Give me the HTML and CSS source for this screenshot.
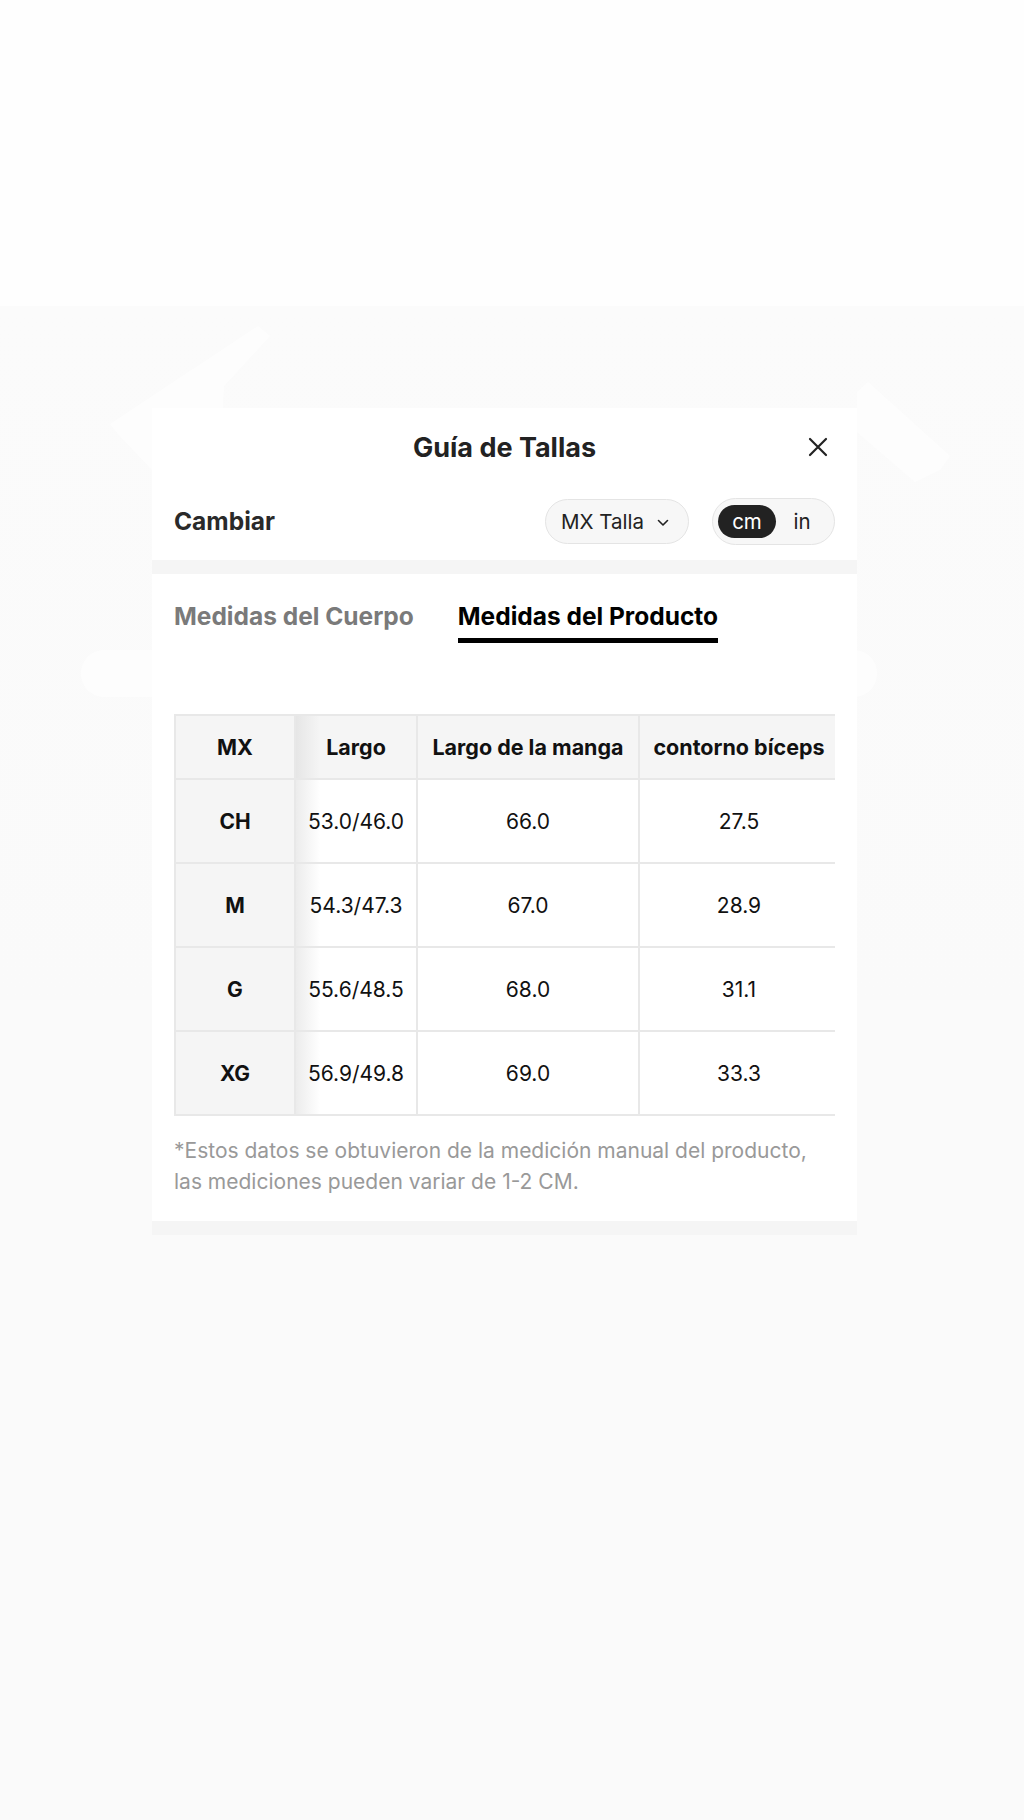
FILE: index.html
```html
<!DOCTYPE html>
<html lang="es">
<head>
    <meta charset="UTF-8">
    <meta name="viewport" content="width=device-width, initial-scale=1.0">
    <link rel="stylesheet" href="styles.css">
    <title>Guía de Tallas</title>
</head>
<body>
    <!-- faint product photo behind the sheet -->
    <svg class="backdrop" width="1024" height="1820" viewBox="0 0 1024 1820">
        <g fill="#fff" opacity="0.6">
            <polygon points="258,326 270,336 224,386 222,420 152,420 152,470 118,434 110,424"/>
            <polygon points="857,392 868,382 950,456 940,470 915,482 857,432"/>
            <rect x="81" y="650" width="796" height="47" rx="23"/>
        </g>
    </svg>

    <div class="sheet">
        <div class="sheet-head">
            <span></span>
            <h2 class="sheet-title">Guía de Tallas</h2>
            <button class="close-btn" type="button">
                <svg width="20" height="20" viewBox="0 0 20 20">
                    <path d="M2 2 L18 18 M18 2 L2 18" stroke="#222" stroke-width="2.2" stroke-linecap="round"/>
                </svg>
            </button>
        </div>

        <div class="switch-row">
            <span class="switch-label">Cambiar</span>
            <div class="switch-controls">
                <button class="size-select" type="button">
                    MX Talla
                    <svg class="chevron" width="12" height="8" viewBox="0 0 12 8">
                        <path d="M1.5 1.5 L6 6 L10.5 1.5" fill="none" stroke="#222" stroke-width="1.6" stroke-linecap="round" stroke-linejoin="round"/>
                    </svg>
                </button>
                <div class="unit-toggle">
                    <span class="unit active">cm</span>
                    <span class="unit">in</span>
                </div>
            </div>
        </div>

        <div class="divider"></div>

        <div class="tabs">
            <span class="tab">Medidas del Cuerpo</span>
            <span class="tab active">Medidas del Producto</span>
        </div>

        <div class="table-wrap">
            <table class="size-table">
                <colgroup>
                    <col class="c-size">
                    <col class="c-largo">
                    <col class="c-manga">
                    <col class="c-biceps">
                </colgroup>
                <thead>
                    <tr>
                        <th>MX</th>
                        <th>Largo</th>
                        <th>Largo de la manga</th>
                        <th>contorno bíceps</th>
                    </tr>
                </thead>
                <tbody>
                    <tr>
                        <th>CH</th>
                        <td>53.0/46.0</td>
                        <td>66.0</td>
                        <td>27.5</td>
                    </tr>
                    <tr>
                        <th>M</th>
                        <td>54.3/47.3</td>
                        <td>67.0</td>
                        <td>28.9</td>
                    </tr>
                    <tr>
                        <th>G</th>
                        <td>55.6/48.5</td>
                        <td>68.0</td>
                        <td>31.1</td>
                    </tr>
                    <tr>
                        <th>XG</th>
                        <td>56.9/49.8</td>
                        <td>69.0</td>
                        <td>33.3</td>
                    </tr>
                </tbody>
            </table>
        </div>

        <p class="note">*Estos datos se obtuvieron de la medición manual del producto,<br>las mediciones pueden variar de 1-2 CM.</p>

        <div class="divider"></div>
    </div>
</body>
</html>
```

FILE: styles.css
```css
html {
    background: linear-gradient(to bottom, #fefefe 0, #fefefe 306px, #fbfbfb 306px, #fafafa 1000px);
}

body {
    margin: 0;
    min-height: 1820px;
    padding-top: 408px;
    box-sizing: border-box;
    font-family: Inter, "Noto Sans", sans-serif;
    color: #222;
    position: relative;
}

.backdrop {
    position: absolute;
    top: 0;
    left: 0;
    z-index: 0;
}

.sheet {
    position: relative;
    z-index: 1;
    margin-left: 152px;
    width: 705px;
    background: #fff;
}

/* header */
.sheet-head {
    display: grid;
    grid-template-columns: 1fr auto 1fr;
    align-items: center;
    height: 78px;
    padding: 0 22px;
}

.sheet-title {
    margin: 0;
    font-size: 27px;
    font-weight: 700;
    color: #222;
}

.close-btn {
    justify-self: end;
    width: 30px;
    height: 30px;
    margin-right: 2px;
    padding: 0;
    border: none;
    background: none;
    display: flex;
    align-items: center;
    justify-content: center;
}

/* size system / unit switch */
.switch-row {
    display: flex;
    align-items: center;
    justify-content: space-between;
    height: 70px;
    padding: 0 22px 4px;
}

.switch-label {
    font-size: 24.5px;
    font-weight: 700;
    color: #2a2a2a;
}

.switch-controls {
    display: flex;
    align-items: center;
    gap: 23px;
}

.size-select {
    display: flex;
    align-items: center;
    gap: 13px;
    height: 45px;
    box-sizing: border-box;
    padding: 0 19px 0 15px;
    border: 1px solid #e4e4e4;
    border-radius: 23px;
    background: #f7f7f7;
    font-family: inherit;
    font-size: 20.5px;
    color: #222;
}

.chevron {
    margin-top: 4px;
}

.unit-toggle {
    display: flex;
    padding: 6px 6px 6px 5px;
    border: 1px solid #e4e4e4;
    border-radius: 24px;
    background: #f7f7f7;
}

.unit {
    display: flex;
    align-items: center;
    justify-content: center;
    width: 52px;
    height: 33px;
    font-size: 20.5px;
    color: #222;
}

.unit.active {
    width: 58px;
    border-radius: 17px;
    background: #222;
    color: #fff;
}

.divider {
    height: 14px;
    background: #f5f5f5;
}

/* tabs */
.tabs {
    display: flex;
    gap: 44px;
    padding: 27px 22px 0;
}

.tab {
    padding-bottom: 7px;
    border-bottom: 5px solid transparent;
    font-size: 24.5px;
    font-weight: 700;
    color: #7a7a7a;
}

.tab.active {
    color: #000;
    border-bottom-color: #000;
}

/* table */
.table-wrap {
    margin: 71px 22px 0;
    overflow: hidden;
}

.size-table {
    table-layout: fixed;
    width: 664px;
    border-collapse: collapse;
    font-size: 21px;
    color: #111;
}

.c-size { width: 120px; }
.c-largo { width: 122px; }
.c-manga { width: 222px; }
.c-biceps { width: 200px; }

.size-table th,
.size-table td {
    border: 2px solid #e8e8e8;
    text-align: center;
    padding: 0 8px;
    white-space: nowrap;
}

.size-table thead th {
    height: 62px;
    background: #f5f5f5;
    font-size: 21.5px;
    font-weight: 700;
}

.size-table tbody th {
    height: 82px;
    background: #f5f5f5;
    font-weight: 700;
}

.size-table td {
    font-weight: 400;
    background: #fff;
}

.size-table thead th:nth-child(2) {
    background: linear-gradient(to right, #e6e6e6, #f5f5f5 24px);
}

.size-table td:nth-child(2) {
    background: linear-gradient(to right, #ececec, #fff 24px);
}

.note {
    margin: 19px 22px 0;
    padding-bottom: 24px;
    font-size: 21px;
    line-height: 31px;
    color: #999;
}
```
